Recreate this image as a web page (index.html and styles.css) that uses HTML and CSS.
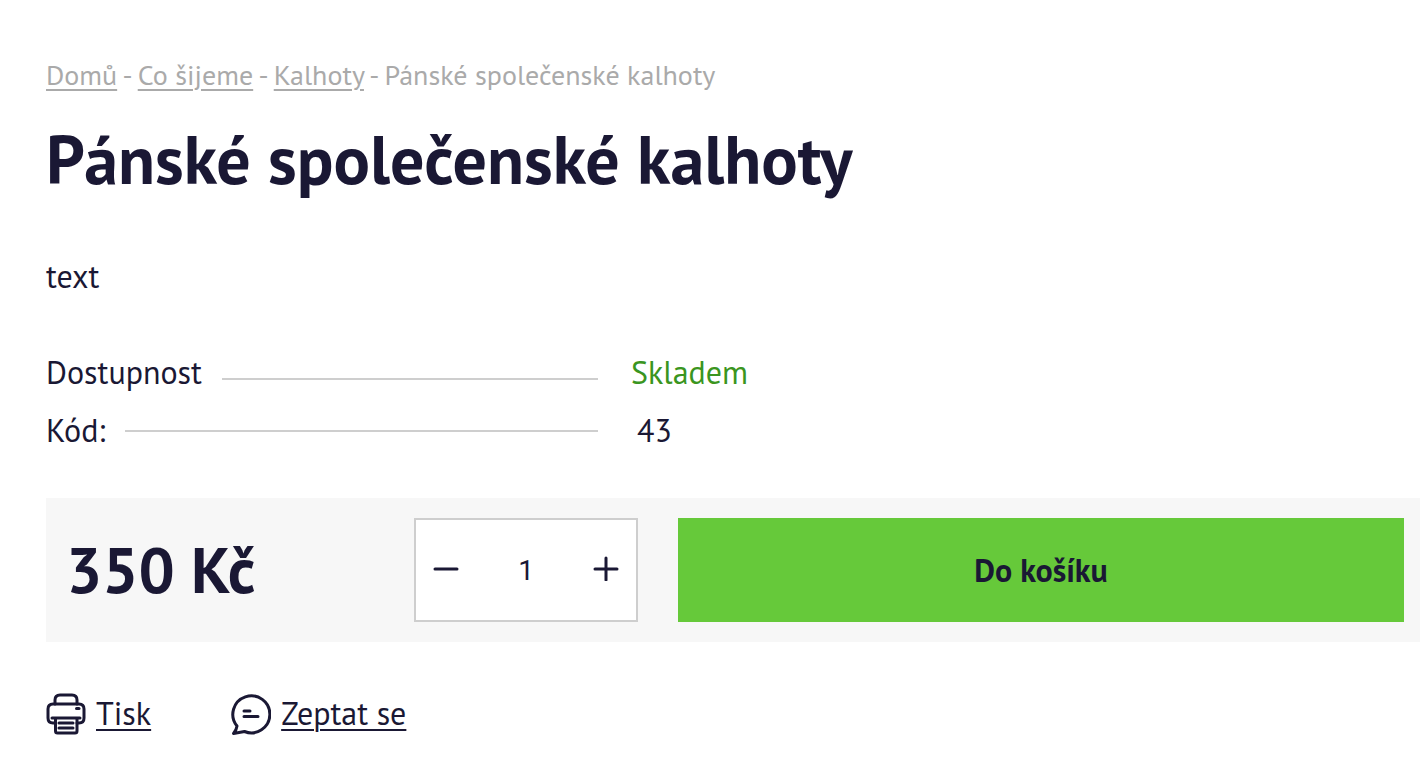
FILE: index.html
```
<!DOCTYPE html>
<html lang="cs">
<head>
    <meta charset="UTF-8">
    <meta name="viewport" content="width=device-width, initial-scale=1.0">
    <title>Pánské společenské kalhoty</title>
    <link rel="stylesheet" href="styles.css">
</head>
<body>

<main class="product">
    <nav class="breadcrumbs">
        <a href="#">Domů</a> - <a href="#">Co šijeme</a> - <a href="#">Kalhoty</a> - <span>Pánské společenské kalhoty</span>
    </nav>

    <h1>Pánské společenské kalhoty</h1>

    <p class="description">text</p>

    <dl class="params">
        <div class="param">
            <dt>Dostupnost</dt>
            <dd class="in-stock">Skladem</dd>
        </div>
        <div class="param param-code">
            <dt>Kód:</dt>
            <dd>43</dd>
        </div>
    </dl>

    <form class="buy-box">
        <strong class="price">350 Kč</strong>
        <div class="quantity">
            <button type="button" id="minus" aria-label="Snížit množství">
                <svg viewBox="0 0 26 26"><path d="M2 14h22"/></svg>
            </button>
            <input type="text" id="amount" value="1" aria-label="Množství">
            <button type="button" id="plus" aria-label="Zvýšit množství">
                <svg viewBox="0 0 26 26"><path d="M2 14h22M13 3v22"/></svg>
            </button>
        </div>
        <button type="button" class="add-to-cart">Do košíku</button>
    </form>

    <div class="actions">
        <a href="#">
            <svg viewBox="0 0 40 42">
                <path d="M9 11V7q0-5 5-5h12q5 0 5 5v4"/>
                <path d="M9 30H7q-5 0-5-5v-9q0-5 5-5h26q5 0 5 5v9q0 5-5 5h-2"/>
                <path d="M6 25h28M9.500 25v13q0 2 2 2h17.500q2 0 2-2V25M13 30h14M13 35h14"/>
                <path d="M30.500 15.500h2.500"/>
            </svg>
            <span>Tisk</span>
        </a>
        <a href="#">
            <svg viewBox="0 0 40 42">
                <path d="M6 33A18.500 18.500 0 1 1 13.500 38.500L2.500 40.500Q5.500 37 6 33z"/>
                <path d="M13 18h6M13 23.500h14"/>
            </svg>
            <span>Zeptat se</span>
        </a>
    </div>
</main>

<script>
const amount = document.getElementById("amount");

document.getElementById("minus").addEventListener("click", () => {
    amount.value = Math.max(1, (parseInt(amount.value) || 1) - 1);
});

document.getElementById("plus").addEventListener("click", () => {
    amount.value = (parseInt(amount.value) || 0) + 1;
});
</script>

</body>
</html>
```
FILE: styles.css
```
body {
    font-family: "PT Sans", Lato, sans-serif;
    font-size: 32px;
    line-height: 40px;
    margin: 0;
    color: #1a1834;
    background-color: #fff;
}

a {
    color: inherit;
}

svg {
    fill: none;
    stroke: currentColor;
    stroke-width: 3;
    stroke-linecap: round;
    stroke-linejoin: round;
}

.product {
    padding: 55px 0 24px 46px;
}

.breadcrumbs {
    font-size: 28px;
    color: #aaa;
}

.breadcrumbs a,
.actions a {
    text-decoration-thickness: 2px;
    text-underline-offset: 4px;
}

h1 {
    margin: 24px 0 57px;
    font-size: 68px;
    line-height: 80px;
    font-weight: bold;
}

.description {
    margin: 0 0 56px;
}

.params {
    margin: 0 0 48px;
}

.param {
    display: grid;
    grid-template-columns: 552px 1fr;
    column-gap: 33px;
    margin-bottom: 18px;
}

.param dt {
    display: flex;
    align-items: center;
    gap: 20px;
}

/* leader line between label and value */
.param dt::after {
    content: "";
    flex: 1;
    height: 2px;
    margin-top: 14px;
    background-color: #cecece;
}

.param-code dt::after {
    margin-top: 2px;
}

.param dd {
    margin: 0;
}

.param-code dd {
    padding-left: 6px;
}

.param .in-stock {
    color: #3a9520;
}

.buy-box {
    display: grid;
    grid-template-columns: 348px 224px 1fr;
    align-items: center;
    padding: 20px 16px 20px 20px;
    background-color: #f7f7f7;
}

.price {
    font-size: 64px;
    line-height: 80px;
}

.quantity {
    display: flex;
    box-sizing: border-box;
    height: 104px;
    border: 2px solid #cecece;
    background-color: #fff;
}

button,
input {
    font-family: inherit;
    color: inherit;
    border: none;
    padding: 0;
}

.quantity button {
    width: 60px;
    background: none;
    cursor: pointer;
}

.quantity svg {
    width: 26px;
    height: 26px;
}

.quantity input {
    flex: 1;
    min-width: 0;
    font-family: Roboto, sans-serif;
    font-size: 28px;
    text-align: center;
    background: none;
}

.add-to-cart {
    height: 104px;
    margin-left: 40px;
    font-size: 32px;
    font-weight: bold;
    background-color: #66c93a;
    cursor: pointer;
}

.add-to-cart:hover {
    background-color: #58b52f;
}

.actions {
    display: flex;
    gap: 80px;
    margin-top: 51px;
}

.actions a {
    display: flex;
    align-items: flex-start;
    gap: 10px;
}

.actions svg {
    width: 40px;
    height: 42px;
}
```
